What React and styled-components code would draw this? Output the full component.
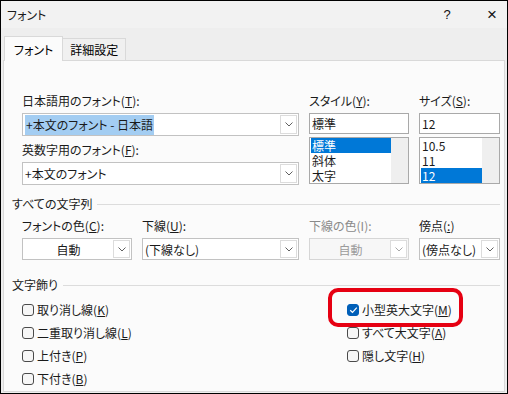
import React from 'react';
import styled, { createGlobalStyle } from 'styled-components';

const Global = createGlobalStyle`
  html, body { margin: 0; padding: 0; background: #fff; }
  * { box-sizing: border-box; }
  body {
    font-family: "Noto Sans CJK JP", "Noto Sans", sans-serif;
    font-size: 12px;
    color: #1a1a1a;
    font-feature-settings: "palt";
  }
`;

const Window = styled.div`
  width: 508px;
  height: 394px;
  border: 1px solid #000;
  background: #eeeeee;
  display: flex;
  flex-direction: column;
`;

const TitleBar = styled.div`
  height: 27px;
  display: flex;
  align-items: center;
  padding-left: 6px;
  background: #f2f2f2;
  line-height: 16px;
`;

const Title = styled.div`
  flex: 1;
`;

const CapBtn = styled.div`
  width: 30px;
  text-align: center;
  font-family: "Liberation Sans", sans-serif;
  font-size: ${p => (p.$big ? '17px' : '13px')};
  margin-right: ${p => (p.$gap ? '15px' : '0')};
  color: #111;
`;

const TabRow = styled.div`
  display: flex;
  align-items: flex-end;
  padding-left: 3px;
  margin-top: 8px;
`;

const Tab = styled.div`
  height: ${p => (p.$active ? '25px' : '22px')};
  margin-bottom: ${p => (p.$active ? '-1px' : '0')};
  padding: 0 ${p => (p.$active ? '9px' : '7px')};
  border: 1px solid #d9d9d9;
  border-bottom: none;
  border-left: ${p => (p.$active ? '1px solid #d9d9d9' : 'none')};
  background: ${p => (p.$active ? '#fbfbfb' : '#f0f0f0')};
  display: flex;
  align-items: center;
  position: relative;
  z-index: ${p => (p.$active ? 1 : 0)};
  color: #000;
`;

const Panel = styled.div`
  flex: 1;
  margin: 0 2px 1px 2px;
  border: 1px solid #d9d9d9;
  background: #fbfbfb;
  padding: 32px 4px 0 8px;
  position: relative;
`;

const Section = styled.div`
  margin-left: 10px;
  width: 478px;
`;

const TopGrid = styled(Section)`
  display: grid;
  grid-template-columns: 277px 100px 81px;
  column-gap: 10px;
`;

const Col = styled.div`
  display: flex;
  flex-direction: column;
`;

const Label = styled.div`
  line-height: 16px;
  height: 16px;
  margin-bottom: 4px;
  margin-top: ${p => p.$mt || 0}px;
  white-space: nowrap;
  color: ${p => (p.$disabled ? '#8a8a8a' : '#1a1a1a')};
`;

const Combo = styled.div`
  height: ${p => p.$h || 23}px;
  border: 1px solid ${p => (p.$disabled ? '#d6d6d6' : '#c2c2c2')};
  background: ${p => (p.$disabled ? '#f7f7f7' : '#fff')};
  display: flex;
  align-items: stretch;
`;

const ComboText = styled.div`
  flex: 1;
  display: flex;
  align-items: center;
  justify-content: ${p => (p.$center ? 'center' : 'flex-start')};
  padding-left: 2px;
  white-space: nowrap;
  overflow: hidden;
  color: ${p => (p.$disabled ? '#9b9b9b' : '#1a1a1a')};
`;

const Selected = styled.span`
  background: #a3cdf2;
  line-height: 20px;
  padding: 0 1px;
`;

const DropBtn = styled.div`
  width: 17px;
  margin: 1px;
  border: 1px solid #dcdcdc;
  background: #fff;
  display: flex;
  align-items: center;
  justify-content: center;
`;

const TextBox = styled.div`
  height: 21px;
  border: 1px solid #a9a9a9;
  background: #fff;
  display: flex;
  align-items: center;
  padding-left: 2px;
`;

const List = styled.div`
  margin-top: 3px;
  height: 47px;
  border: 1px solid #a9a9a9;
  background: #fff;
  display: flex;
  padding: 0 0 0 1px;
`;

const ListItems = styled.div`
  flex: 1;
  display: flex;
  flex-direction: column;
`;

const Item = styled.div`
  height: 15px;
  line-height: 15px;
  padding-left: 1px;
  background: ${p => (p.$sel ? '#0078d7' : 'transparent')};
  color: ${p => (p.$sel ? '#fff' : '#1a1a1a')};
`;

const Scroll = styled.div`
  width: 17px;
  background: #efefef;
`;

const GroupHeader = styled.div`
  display: flex;
  align-items: center;
  gap: 5px;
  width: 488px;
  margin-top: ${p => p.$mt}px;
  line-height: 16px;
  &::after {
    content: '';
    flex: 1;
    height: 1px;
    background: #dcdcdc;
  }
`;

const FieldRow = styled(Section)`
  margin-top: 6px;
  display: grid;
  grid-template-columns: 110px 157px 100px 81px;
  column-gap: 10px;
`;

const Checks = styled(Section)`
  margin-top: 5px;
  display: grid;
  grid-template-columns: 325px 1fr;
  grid-auto-flow: column;
  grid-template-rows: repeat(4, 23px);
`;

const CheckRow = styled.div`
  display: flex;
  align-items: center;
  grid-column: ${p => p.$col};
  white-space: nowrap;
`;

const Box = styled.span`
  width: 12px;
  height: 12px;
  border: 1px solid ${p => (p.$on ? '#005fb8' : '#4a4a4a')};
  border-radius: 3px;
  background: ${p => (p.$on ? '#005fb8' : '#f6f6f6')};
  margin-right: 3px;
  display: flex;
  align-items: center;
  justify-content: center;
`;

const Highlight = styled.div`
  position: absolute;
  left: 324px;
  top: 227px;
  width: 135px;
  height: 39px;
  border: 4px solid #e60012;
  border-radius: 10px;
  pointer-events: none;
`;

const Chevron = ({ color = '#606060' }) => (
  <svg width="8" height="5" viewBox="0 0 8 5">
    <path d="M0.5 0.5 L4 4 L7.5 0.5" fill="none" stroke={color} strokeWidth="1" />
  </svg>
);

const Check = () => (
  <svg width="9" height="8" viewBox="0 0 9 8">
    <path d="M1.2 4.2 L3.5 6.3 L7.8 1.6" fill="none" stroke="#fff" strokeWidth="1.2" />
  </svg>
);

const ComboBox = ({ children, h, center, disabled }) => (
  <Combo $h={h} $disabled={disabled}>
    <ComboText $center={center} $disabled={disabled}>{children}</ComboText>
    <DropBtn>
      <Chevron color={disabled ? '#a8a8a8' : '#606060'} />
    </DropBtn>
  </Combo>
);

const CheckBox = ({ on, col, children }) => (
  <CheckRow $col={col}>
    <Box $on={on}>{on && <Check />}</Box>
    {children}
  </CheckRow>
);

export default function App() {
  return (
    <>
      <Global />
      <Window>
        <TitleBar>
          <Title>フォント</Title>
          <CapBtn $gap>?</CapBtn>
          <CapBtn $big>×</CapBtn>
        </TitleBar>
        <TabRow>
          <Tab $active>フォント</Tab>
          <Tab>詳細設定</Tab>
        </TabRow>
        <Panel>
          <TopGrid>
            <Col>
              <Label>日本語用のフォント(<u>T</u>):</Label>
              <ComboBox>
                <Selected>+本文のフォント - 日本語</Selected>
              </ComboBox>
              <Label $mt={6}>英数字用のフォント(<u>F</u>):</Label>
              <ComboBox>+本文のフォント</ComboBox>
            </Col>
            <Col>
              <Label>スタイル(<u>Y</u>):</Label>
              <TextBox>標準</TextBox>
              <List>
                <ListItems>
                  <Item $sel>標準</Item>
                  <Item>斜体</Item>
                  <Item>太字</Item>
                </ListItems>
                <Scroll />
              </List>
            </Col>
            <Col>
              <Label>サイズ(<u>S</u>):</Label>
              <TextBox>12</TextBox>
              <List>
                <ListItems>
                  <Item>10.5</Item>
                  <Item>11</Item>
                  <Item $sel>12</Item>
                </ListItems>
                <Scroll />
              </List>
            </Col>
          </TopGrid>

          <GroupHeader $mt={11}>すべての文字列</GroupHeader>
          <FieldRow>
            <Col>
              <Label>フォントの色(<u>C</u>):</Label>
              <ComboBox h={22} center>自動</ComboBox>
            </Col>
            <Col>
              <Label>下線(<u>U</u>):</Label>
              <ComboBox h={22}>(下線なし)</ComboBox>
            </Col>
            <Col>
              <Label $disabled>下線の色(I):</Label>
              <ComboBox h={22} center disabled>自動</ComboBox>
            </Col>
            <Col>
              <Label>傍点(<u>:</u>)</Label>
              <ComboBox h={22}>(傍点なし)</ComboBox>
            </Col>
          </FieldRow>

          <GroupHeader $mt={17}>文字飾り</GroupHeader>
          <Checks>
            <CheckBox col={1}>取り消し線(<u>K</u>)</CheckBox>
            <CheckBox col={1}>二重取り消し線(<u>L</u>)</CheckBox>
            <CheckBox col={1}>上付き(<u>P</u>)</CheckBox>
            <CheckBox col={1}>下付き(<u>B</u>)</CheckBox>
            <CheckBox col={2} on>小型英大文字(<u>M</u>)</CheckBox>
            <CheckBox col={2}>すべて大文字(<u>A</u>)</CheckBox>
            <CheckBox col={2}>隠し文字(<u>H</u>)</CheckBox>
          </Checks>
          <Highlight />
        </Panel>
      </Window>
    </>
  );
}
